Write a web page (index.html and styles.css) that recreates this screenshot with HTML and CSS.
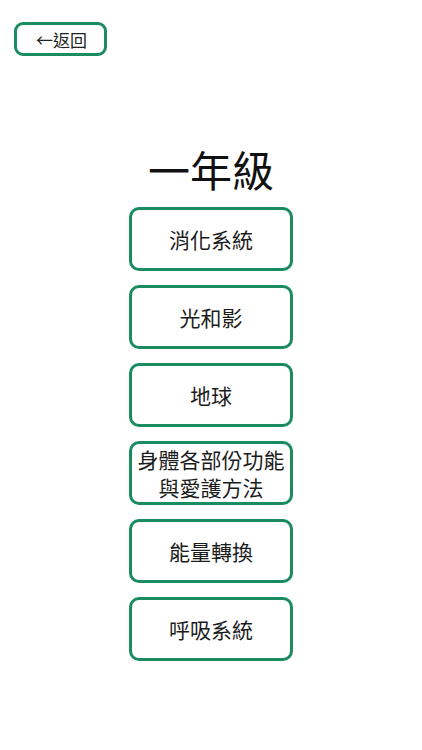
FILE: index.html
```html
<!DOCTYPE html>
<html lang="zh-Hant">
<head>
<meta charset="utf-8">
<title>一年級</title>
<link rel="stylesheet" href="styles.css">
</head>
<body>
<div class="page">
  <div class="top">
    <button class="back">←返回</button>
  </div>
  <h1 class="title">一年級</h1>
  <div class="list">
    <button class="topic">消化系統</button>
    <button class="topic">光和影</button>
    <button class="topic">地球</button>
    <button class="topic">身體各部份功能與愛護方法</button>
    <button class="topic">能量轉換</button>
    <button class="topic">呼吸系統</button>
  </div>
</div>
</body>
</html>
```
FILE: styles.css
```css
html, body {
  margin: 0;
  padding: 0;
  background: #ffffff;
}
body {
  font-family: "Noto Sans CJK TC", "Noto Sans", sans-serif;
  color: #1c1c1c;
}
.page {
  width: 422px;
  display: flex;
  flex-direction: column;
}
.top {
  padding: 22px 0 0 14px;
  display: flex;
}
.back {
  box-sizing: border-box;
  width: 93px;
  height: 34px;
  border: 3px solid #1b8b60;
  border-radius: 9px;
  background: #fff;
  font-family: "Noto Sans CJK TC", sans-serif;
  font-size: 17px;
  line-height: 1;
  color: #222;
  padding: 0 0 0 2px;
  display: flex;
  align-items: center;
  justify-content: center;
}
.title {
  margin: 92px 0 0 0;
  font-size: 42px;
  line-height: 42px;
  font-weight: 400;
  text-align: center;
  color: #111;
}
.list {
  margin-top: 17px;
  display: flex;
  flex-direction: column;
  align-items: center;
  gap: 14px;
}
.topic {
  box-sizing: border-box;
  width: 164px;
  height: 64px;
  border: 3px solid #1b8b60;
  border-radius: 10px;
  background: #fff;
  font-family: "Noto Sans CJK TC", sans-serif;
  font-size: 21px;
  line-height: 28px;
  color: #1c1c1c;
  padding: 0 4px;
  display: flex;
  align-items: center;
  justify-content: center;
  text-align: center;
}
```
